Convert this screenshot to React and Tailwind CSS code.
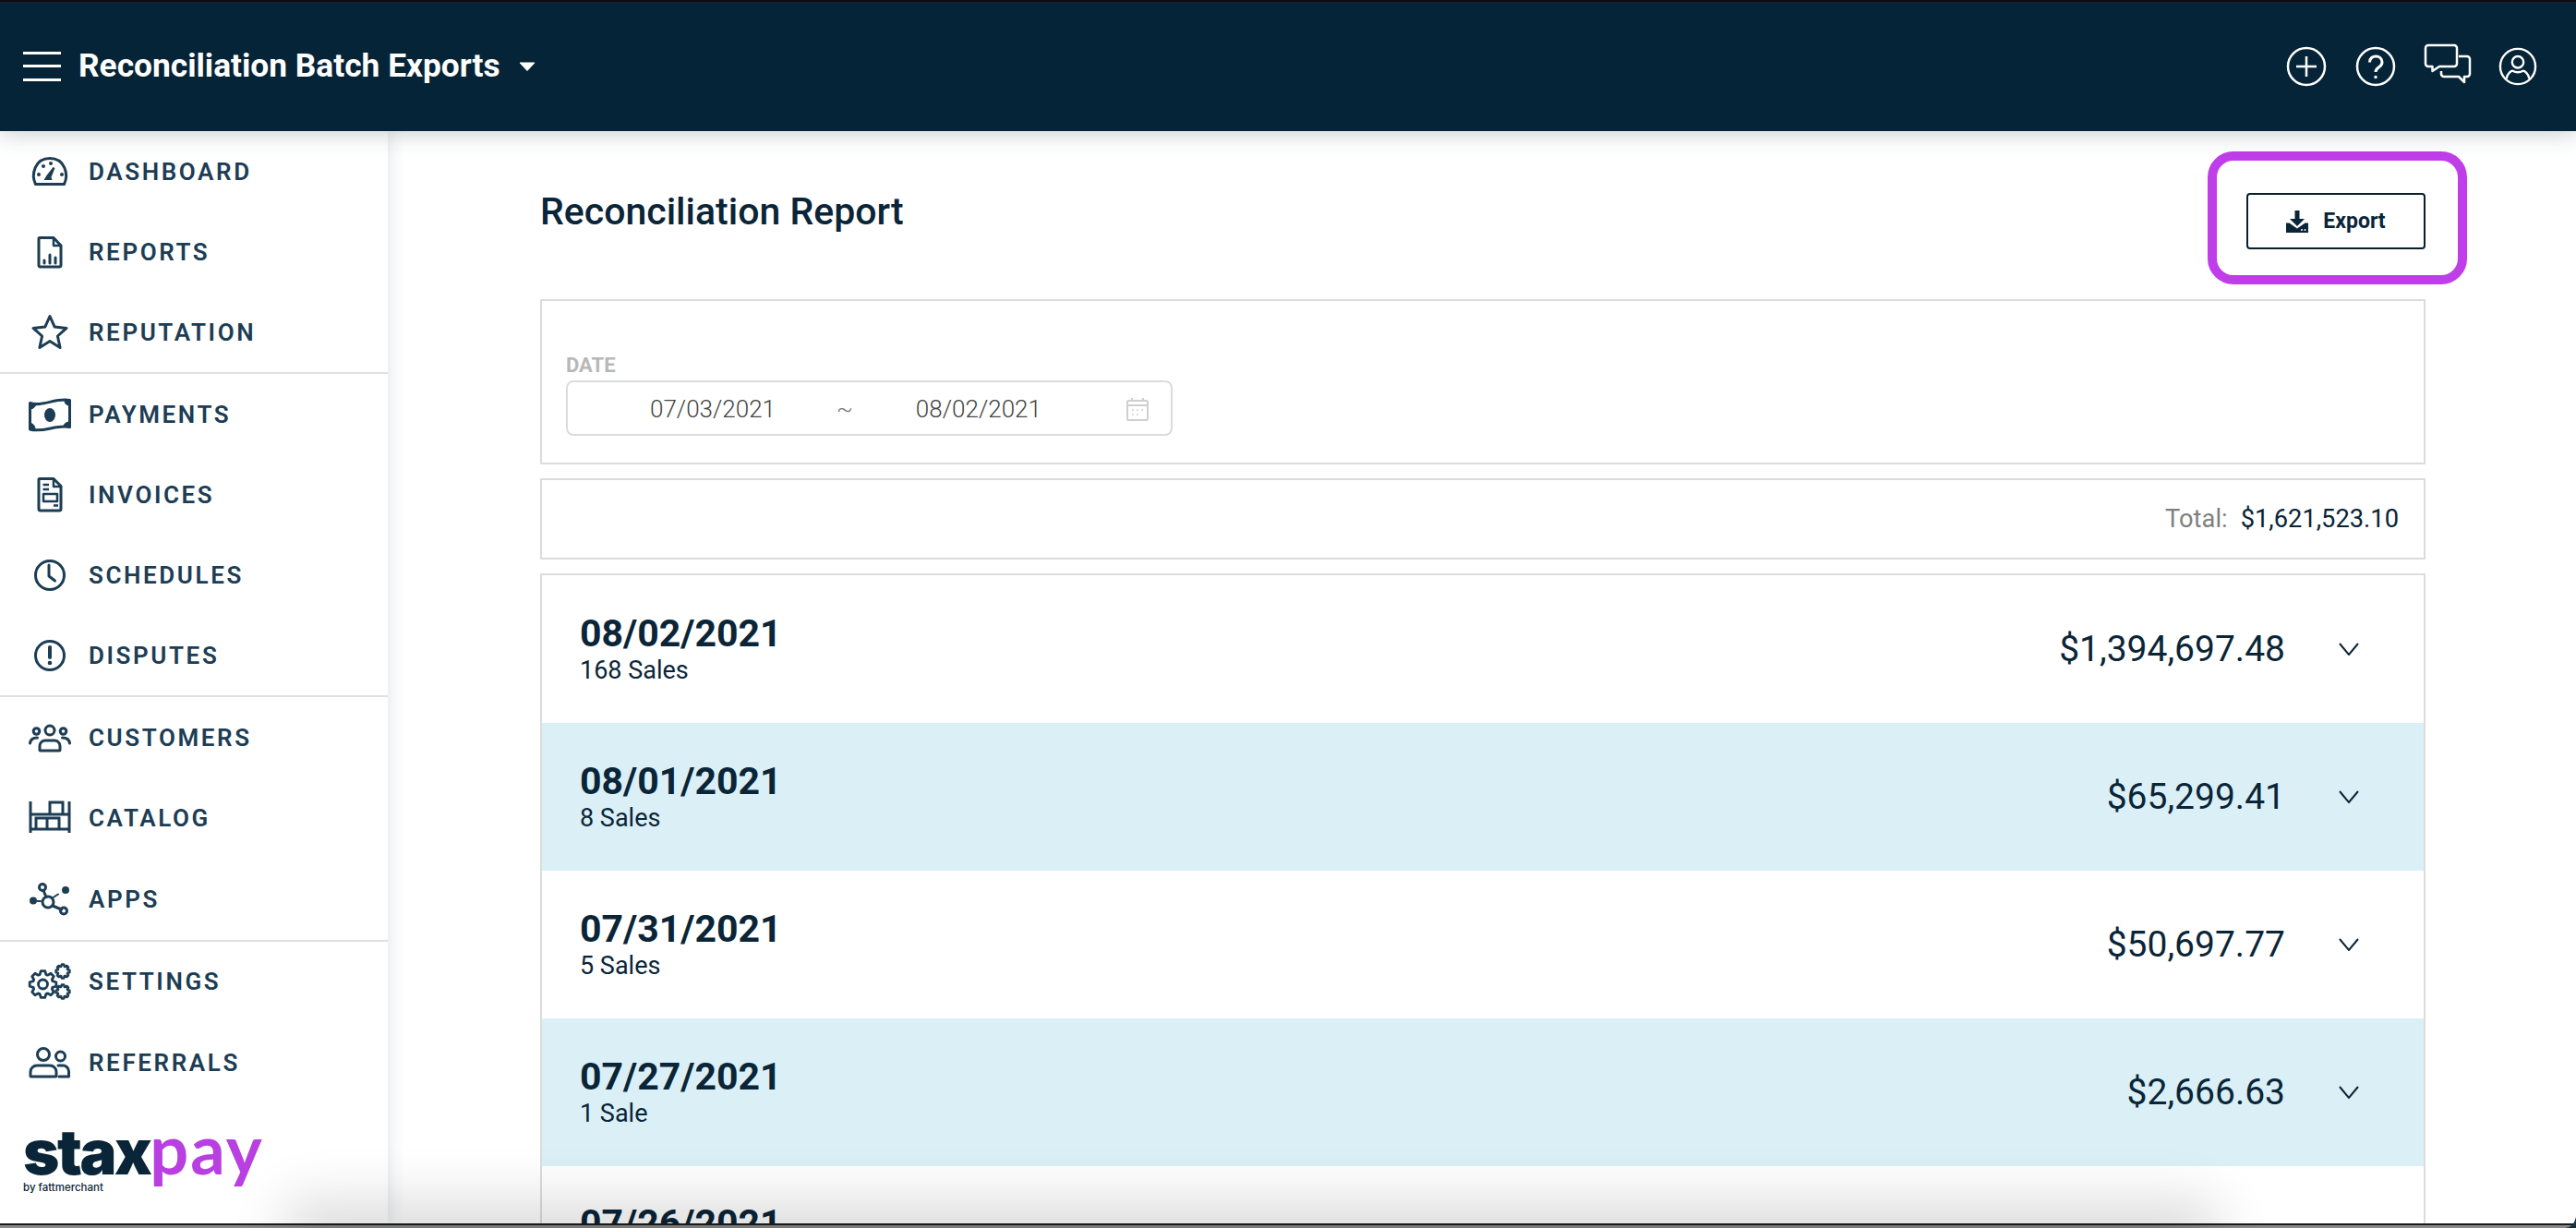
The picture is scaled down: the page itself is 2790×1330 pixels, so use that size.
import React from "react";

const NAVY = "#1c3d54";

function gearPath(cx, cy, ro, ri, teeth) {
  const pts = [];
  const step = (Math.PI * 2) / teeth;
  for (let i = 0; i < teeth; i++) {
    const a = i * step - Math.PI / 2;
    const w = step * 0.2;
    const seq = [
      [ri, a - step / 2 + w * 0.5],
      [ro, a - w],
      [ro, a + w],
      [ri, a + step / 2 - w * 0.5],
    ];
    seq.forEach(([r, t]) => pts.push(`${(cx + r * Math.cos(t)).toFixed(2)} ${(cy + r * Math.sin(t)).toFixed(2)}`));
  }
  return "M" + pts.join("L") + "Z";
}

const Svg = ({ children }) => (
  <svg viewBox="0 0 48 48" className="w-[48px] h-[48px] shrink-0" fill="none" stroke={NAVY} strokeWidth="3" strokeLinejoin="round" strokeLinecap="round">
    {children}
  </svg>
);

const icons = {
  dashboard: (
    <Svg>
      <path d="M8.5 37.5C3.5 27 7.5 9.5 24 9.5S44.5 27 39.5 37.5Z" />
      <g fill={NAVY} stroke="none">
        <circle cx="12" cy="27" r="2" /><circle cx="17" cy="18" r="2" /><circle cx="25" cy="15" r="2" /><circle cx="37" cy="27" r="2" />
        <path d="M17.5 33l3-5 7-9 2 1-4 10 1 3z" />
      </g>
    </Svg>
  ),
  reports: (
    <Svg>
      <path d="M12.5 8.5H28L36 17V38a2 2 0 0 1-2 2H14a2 2 0 0 1-2-2V9Z" />
      <path d="M28 9V17H36" strokeWidth="2.5" />
      <path d="M18 36V33M24 36V27M30 36V30" strokeWidth="3" />
    </Svg>
  ),
  reputation: (
    <Svg>
      <path d="M24 6.5l5.2 11.6 12.8 1.3-9.6 8.6 2.7 12.5L24 33.6l-11.1 6.9 2.7-12.5L6 19.4l12.8-1.3Z" />
    </Svg>
  ),
  payments: (
    <Svg>
      <path d="M2.500 11.500C16 16 30 5.500 45.500 8.500V37.500C31 34.500 17 44 2.500 40Z" />
      <path d="M3 12h6c0 3-3 6-6 6zM45 9h-5c0 3 2 5 5 5zM3 39.500h5c0-3-2-6-5-6zM45 37h-6c0-3 3-5 6-5z" fill={NAVY} strokeWidth="1" />
      <ellipse cx="24" cy="24.500" rx="6" ry="7.500" fill={NAVY} stroke="none" />
    </Svg>
  ),
  invoices: (
    <Svg>
      <path d="M12.5 6.500H28L36 14.500V39a2 2 0 0 1-2 2H14a2 2 0 0 1-2-2V7Z" />
      <path d="M28 7V15H36" strokeWidth="2.5" />
      <path d="M16.500 13H23M16.500 18H23M28 35.500H33" strokeWidth="2.500" strokeLinecap="butt" />
      <rect x="17" y="23" width="15" height="8" strokeWidth="2.500" />
    </Svg>
  ),
  schedules: (
    <Svg>
      <circle cx="24" cy="24" r="15.500" />
      <path d="M23 13V25L29.500 30" />
    </Svg>
  ),
  disputes: (
    <Svg>
      <circle cx="24" cy="24" r="15.500" />
      <path d="M24 15V26" strokeWidth="4" />
      <circle cx="24" cy="32" r="2.300" fill={NAVY} stroke="none" />
    </Svg>
  ),
  customers: (
    <Svg>
      <circle cx="24" cy="16" r="5" />
      <circle cx="9.500" cy="17" r="3.300" />
      <circle cx="38.500" cy="17" r="3.300" />
      <path d="M13 37V33a6 6 0 0 1 6-6H29a6 6 0 0 1 6 6V37Q35 38 34 38H14Q13 38 13 37Z" />
      <path d="M2.500 30c.5-4 3-6 8-6M45.500 30c-.5-4-3-6-8-6" />
    </Svg>
  ),
  catalog: (
    <Svg>
      <path d="M3 6V40M45 6V40M3 20H45M3 36H45" strokeLinecap="butt" />
      <path d="M24 20V7H38V20M9 36V24H34V36M21 24V36" strokeLinecap="butt" strokeLinejoin="miter" />
    </Svg>
  ),
  apps: (
    <Svg>
      <circle cx="22" cy="27" r="6" />
      <circle cx="16" cy="11" r="3.500" />
      <circle cx="39" cy="36.500" r="3.500" />
      <circle cx="41" cy="14" r="4" fill={NAVY} stroke="none" />
      <circle cx="6" cy="25.500" r="4" fill={NAVY} stroke="none" />
      <path d="M17 14.500L20 21.500M27 31L36.500 35" />
      <path d="M27.500 22L33 18.500M10.500 26H14" strokeWidth="2" />
    </Svg>
  ),
  settings: (
    <Svg>
      <path d={gearPath(16.500, 27, 14.500, 11, 8)} strokeWidth="2.800" />
      <circle cx="16.500" cy="27" r="5" strokeWidth="2.800" />
      <path d={gearPath(38, 13, 7.500, 5.500, 8)} strokeWidth="2.500" />
      <path d={gearPath(38, 35, 7.500, 5.500, 8)} strokeWidth="2.500" />
    </Svg>
  ),
  referrals: (
    <Svg>
      <circle cx="17" cy="15" r="6.500" />
      <circle cx="35.500" cy="17" r="5" />
      <path d="M3 38V34a7 7 0 0 1 7-7H24a7 7 0 0 1 7 7V38a1 1 0 0 1-1 1H4a1 1 0 0 1-1-1Z" />
      <path d="M33 27H38a6.500 6.500 0 0 1 6.500 6.500V39H34" />
    </Svg>
  ),
};

const NavItem = ({ icon, label, h = "h-[87.5px]" }) => (
  <div className={`flex items-center ${h} pl-[30px] gap-[18px]`}>
    {icons[icon]}
    <span className="text-[26px] font-semibold tracking-[2.6px] text-[#1c3d54] leading-none">{label}</span>
  </div>
);

const Divider = () => <div className="h-[2px] bg-[#dfe0e4]" />;

const Sidebar = () => (
  <aside className="w-[420px] shrink-0 bg-white relative z-[5] shadow-[2px_0_16px_rgba(40,60,80,0.13)] flex flex-col">
    <NavItem icon="dashboard" label="DASHBOARD" h="h-[87px]" />
    <NavItem icon="reports" label="REPORTS" h="h-[87px]" />
    <NavItem icon="reputation" label="REPUTATION" h="h-[87px]" />
    <Divider />
    <NavItem icon="payments" label="PAYMENTS" h="h-[87px]" />
    <NavItem icon="invoices" label="INVOICES" h="h-[87px]" />
    <NavItem icon="schedules" label="SCHEDULES" h="h-[87px]" />
    <NavItem icon="disputes" label="DISPUTES" h="h-[87px]" />
    <Divider />
    <NavItem icon="customers" label="CUSTOMERS" />
    <NavItem icon="catalog" label="CATALOG" />
    <NavItem icon="apps" label="APPS" />
    <Divider />
    <NavItem icon="settings" label="SETTINGS" />
    <NavItem icon="referrals" label="REFERRALS" />
    <div className="pl-[25px] mt-[20px]">
      <div className="flex items-baseline leading-[58px]">
        <span className="font-['Inter',sans-serif] font-black text-[67px] tracking-[-2.5px] text-[#0a2538]">stax</span>
        <span className="font-['Lato',sans-serif] font-bold text-[74px] tracking-[2px] text-[#b83fe0]">pay</span>
      </div>
      <div className="font-['Inter',sans-serif] font-medium text-[11.5px] leading-none text-[#0a2538] mt-[4px]">by fattmerchant</div>
    </div>
  </aside>
);

const Header = () => (
  <header className="h-[142px] shrink-0 bg-[#062437] border-t-2 border-[#150a14] relative z-10 shadow-[0_4px_22px_rgba(30,50,70,0.22)] flex items-center justify-between pl-[25px]">
    <div className="flex items-center">
      <div className="w-[41px] h-[32px] flex flex-col justify-between">
        <div className="h-[3px] bg-white" /><div className="h-[3px] bg-white" /><div className="h-[3px] bg-white" />
      </div>
      <h1 className="ml-[19px] text-[35.300px] font-bold text-white leading-none">Reconciliation Batch Exports</h1>
      <svg viewBox="0 0 18 10" className="w-[18px] h-[10px] ml-[20px]"><path d="M1 1h16L9 9.500Z" fill="#fff" stroke="#fff" strokeLinejoin="round" /></svg>
    </div>
    <div className="flex items-center pr-[42px] gap-[24px]">
      <svg viewBox="0 0 44 44" className="w-[44px] h-[44px]" fill="none" stroke="#fff" strokeWidth="2.500"><circle cx="22" cy="22" r="20" /><path d="M22 11V33M11 22H33" /></svg>
      <svg viewBox="0 0 44 44" className="w-[44px] h-[44px] ml-[7px]" fill="none" stroke="#fff" strokeWidth="2.500"><circle cx="22" cy="22" r="20" /><path d="M15.500 17.500c0-9 13.500-8.500 13.500 0 0 5.500-7 5-7 10.500" strokeWidth="3" /><circle cx="22" cy="33.500" r="1.700" fill="#fff" stroke="none" /></svg>
      <svg viewBox="0 0 52 46" className="w-[52px] h-[46px] -mt-[5px] ml-[6px]" fill="none" stroke="#fff" strokeWidth="2.500" strokeLinejoin="round"><path d="M5 2H33a3 3 0 0 1 3 3V22a3 3 0 0 1-3 3H17L9.500 30V25H5a3 3 0 0 1-3-3V5a3 3 0 0 1 3-3Z" /><path d="M38 14H47a3 3 0 0 1 3 3V33a3 3 0 0 1-3 3H44V42L38 36H22a3 3 0 0 1-3-3V30" /></svg>
      <svg viewBox="0 0 44 44" className="w-[42px] h-[42px] ml-[5px]" fill="none" stroke="#fff" strokeWidth="2.500"><circle cx="22" cy="22" r="20" /><circle cx="22" cy="17" r="6.500" /><path d="M9 36c1-7 6-9 7-9 4 2 8 2 12 0 1 0 6 2 7 9" /></svg>
    </div>
  </header>
);

const ExportButton = () => (
  <button className="relative mt-[67px] w-[194px] h-[61px] border-2 border-[#0a1f2e] rounded-[4px] flex items-center justify-center gap-[16px] bg-white">
    <svg viewBox="0 0 24 24" className="w-[24px] h-[24px] shrink-0" fill="#0a2538">
      <path d="M9.500 0h5v9H20l-8 8-8-8h5.500Z" />
      <path d="M0 13.500h3.500l8.500 6 8.500-6H24V24H0Z" />
      <circle cx="17" cy="21" r="1" fill="#fff" /><circle cx="20.500" cy="21" r="1" fill="#fff" />
    </svg>
    <span className="text-[23px] font-bold text-[#0a2538] leading-none">Export</span>
    <span className="absolute left-[-44px] right-[-47px] top-[-47px] bottom-[-40px] border-[10px] border-[#c03eea] rounded-[28px] pointer-events-none" />
  </button>
);

const DateCard = () => (
  <section className="h-[179px] border-2 border-[#dcdcdc] pl-[26px] pt-[58px]">
    <div className="text-[22px] font-bold leading-[24px] text-[#b8b8b8]">DATE</div>
    <div className="mt-[4px] w-[657px] h-[60px] pt-[2px] border-2 border-[#dcdcdc] rounded-[8px] flex items-center text-[26px] text-[#444] font-light">
      <span className="ml-[89px]">07/03/2021</span>
      <span className="ml-[66px] text-[#777]">~</span>
      <span className="ml-[68px]">08/02/2021</span>
      <svg viewBox="0 0 24 26" className="w-[24px] h-[26px] ml-[92px]" fill="none" stroke="#cfcfcf" strokeWidth="2">
        <rect x="1" y="4" width="22" height="21" rx="1.500" /><path d="M1 9H23M6 1V5M18 1V5" />
        <path d="M6 14h2M11 14h2M16 14h2M6 19h2M11 19h2" strokeWidth="1.500" />
      </svg>
    </div>
  </section>
);

const TotalCard = () => (
  <section className="mt-[15px] h-[88px] pt-[2px] border-2 border-[#dcdcdc] flex items-center justify-end pr-[27px] text-[27.300px] leading-none">
    <span className="text-[#7f7f7f]">Total:</span>
    <span className="ml-[14px] text-[#0a2538]">$1,621,523.10</span>
  </section>
);

const rows = [
  { date: "08/02/2021", sales: "168 Sales", amount: "$1,394,697.48" },
  { date: "08/01/2021", sales: "8 Sales", amount: "$65,299.41", teal: true },
  { date: "07/31/2021", sales: "5 Sales", amount: "$50,697.77" },
  { date: "07/27/2021", sales: "1 Sale", amount: "$2,666.63", teal: true },
];

const Row = ({ date, sales, amount, teal }) => (
  <div className={`h-[160px] flex items-center justify-between pl-[41px] pr-[70px] ${teal ? "bg-[#dbf0f6]" : "bg-white"}`}>
    <div>
      <div className="text-[41px] font-bold leading-[46px] text-[#0a2538]">{date}</div>
      <div className="text-[27px] leading-[34px] text-[#0a2538]">{sales}</div>
    </div>
    <div className="flex items-center gap-[58px]">
      <span className="text-[39px] leading-none text-[#0a2538]">{amount}</span>
      <svg viewBox="0 0 22 14" className="w-[22px] h-[14px]" fill="none" stroke="#0a2538" strokeWidth="2"><path d="M1 1L11 13L21 1" /></svg>
    </div>
  </div>
);

export default function App() {
  return (
    <div className="relative w-[2790px] h-[1330px] overflow-hidden bg-white flex flex-col font-['Roboto',sans-serif]">
      <Header />
      <div className="flex flex-1 min-h-0 overflow-hidden">
        <Sidebar />
        <main className="flex-1 min-w-0 pl-[165px] pr-[163px] overflow-hidden">
          <div className="flex justify-between items-start h-[182px]">
            <h2 className="mt-[64px] text-[41px] font-medium leading-[46px] text-[#0a2538]">Reconciliation Report</h2>
            <ExportButton />
          </div>
          <DateCard />
          <TotalCard />
          <section className="mt-[15px] border-2 border-[#dcdcdc]">
            {rows.map((r) => <Row key={r.date} {...r} />)}
            <div className="h-[160px] pl-[41px] pt-[39px] text-[41px] font-bold leading-[46px] text-[#0a2538]">07/26/2021</div>
          </section>
        </main>
      </div>
      <div className="h-[5px] shrink-0 border-t-2 border-[#1a1c1f] bg-[#8a8a8a]" />
      <div className="absolute left-[340px] right-[420px] bottom-[-20px] h-[20px] shadow-[0_0_60px_30px_rgba(0,0,0,0.14)] pointer-events-none z-20" />
      <svg viewBox="0 0 12 12" className="absolute right-0 bottom-0 w-[12px] h-[12px] z-30"><path d="M12 0V12H0Q10 11 12 0Z" fill="#123444" /></svg>
    </div>
  );
}
